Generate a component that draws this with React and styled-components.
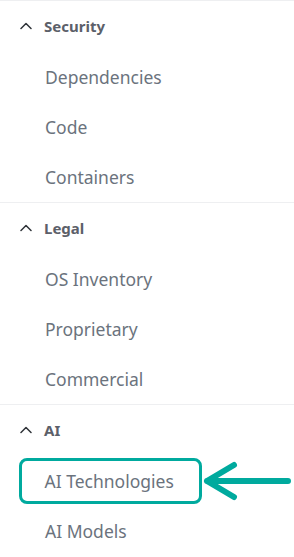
import styled, { createGlobalStyle } from "styled-components";

const GlobalStyle = createGlobalStyle`
  html, body {
    margin: 0;
    padding: 0;
    background: #fff;
  }
  body {
    font-family: "Noto Sans", "Open Sans", sans-serif;
  }
`;

const sections = [
  { title: "Security", items: ["Dependencies", "Code", "Containers"] },
  { title: "Legal", items: ["OS Inventory", "Proprietary", "Commercial"] },
  { title: "AI", items: ["AI Technologies", "AI Models"], highlight: "AI Technologies" },
];

export default function App() {
  return (
    <>
      <GlobalStyle />
      <Nav>
        {sections.map((s) => (
          <Section key={s.title}>
            <Header>
              <Chevron width="12" height="8" viewBox="0 0 12 8">
                <path d="M1 6.5 L6 1.5 L11 6.5" />
              </Chevron>
              <HeaderText>{s.title}</HeaderText>
            </Header>
            {s.items.map((item) =>
              item === s.highlight ? (
                <MarkedRow key={item}>
                  <Highlight>{item}</Highlight>
                  <Arrow width="90" height="40" viewBox="0 0 90 40">
                    <path d="M5 20 L86 20 M5 20 L32 4 M5 20 L32 36" />
                  </Arrow>
                </MarkedRow>
              ) : (
                <Item key={item}>{item}</Item>
              )
            )}
          </Section>
        ))}
      </Nav>
    </>
  );
}

const Nav = styled.nav`
  width: 294px;
  display: flex;
  flex-direction: column;
`;

const Section = styled.section`
  border-top: 1px solid #eeeff1;
  display: flex;
  flex-direction: column;
`;

const Header = styled.div`
  height: 50px;
  margin-bottom: 1px;
  display: flex;
  align-items: center;
  padding-left: 20px;
  gap: 12px;
`;

const Chevron = styled.svg`
  fill: none;
  stroke: #2f3338;
  stroke-width: 1.5;
  stroke-linecap: round;
  stroke-linejoin: round;
`;

const HeaderText = styled.span`
  font-size: 15px;
  font-weight: 700;
  color: #5c6069;
`;

const Item = styled.div`
  height: 50px;
  display: flex;
  align-items: center;
  padding-left: 45px;
  font-size: 17.5px;
  color: #6b737d;
`;

const MarkedRow = styled.div`
  height: 50px;
  display: flex;
  align-items: center;
  padding-left: 19px;
`;

const Highlight = styled.div`
  box-sizing: border-box;
  width: 183px;
  height: 46px;
  border: 3.5px solid #00aa9e;
  border-radius: 8px;
  display: flex;
  align-items: center;
  padding-left: 22.5px;
  font-size: 17.5px;
  color: #6b737d;
`;

const Arrow = styled.svg`
  fill: none;
  stroke: #00aa9e;
  stroke-width: 6;
  stroke-linecap: round;
  stroke-linejoin: round;
`;
